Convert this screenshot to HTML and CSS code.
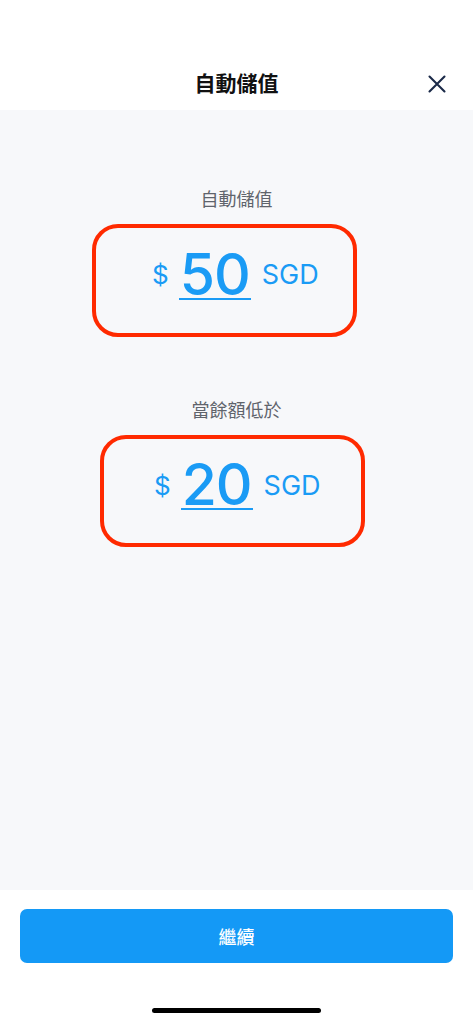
FILE: index.html
```html
<!DOCTYPE html>
<html lang="zh-Hant">
<head>
<meta charset="utf-8">
<title>自動儲值</title>
<link rel="stylesheet" href="styles.css">
</head>
<body>
<div class="screen">
  <header class="topbar">
    <div class="topbar-side"></div>
    <h1 class="topbar-title">自動儲值</h1>
    <div class="topbar-side topbar-side-right">
      <button class="close-btn" aria-label="關閉">
        <svg width="18" height="18" viewBox="0 0 18 18"><path d="M1.5 1.5 L16.5 16.5 M16.5 1.5 L1.5 16.5" stroke="#1b2a48" stroke-width="2.1" stroke-linecap="round" fill="none"/></svg>
      </button>
    </div>
  </header>
  <main class="content">
    <section class="field field-first">
      <div class="field-label">自動儲值</div>
      <div class="amount-box amount-box-a">
        <span class="currency">$</span>
        <span class="value">50</span>
        <span class="unit">SGD</span>
      </div>
    </section>
    <section class="field field-second">
      <div class="field-label">當餘額低於</div>
      <div class="amount-box amount-box-b">
        <span class="currency">$</span>
        <span class="value">20</span>
        <span class="unit">SGD</span>
      </div>
    </section>
  </main>
  <footer class="bottom">
    <button class="primary-btn">繼續</button>
    <div class="home-indicator"></div>
  </footer>
</div>
</body>
</html>
```
FILE: styles.css
```css
* { box-sizing: border-box; }
html, body { margin: 0; padding: 0; }
body {
  width: 473px;
  height: 1024px;
  background: #ffffff;
  font-family: "Inter", "Noto Sans CJK TC", sans-serif;
  overflow: hidden;
}
.screen {
  display: flex;
  flex-direction: column;
  height: 1024px;
}
.topbar {
  height: 110px;
  padding-top: 56px;
  display: grid;
  grid-template-columns: 1fr auto 1fr;
  align-items: start;
  background: #ffffff;
}
.topbar-title {
  margin: 0;
  height: 52px;
  line-height: 52px;
  font-family: "Noto Sans CJK TC", sans-serif;
  font-size: 21px;
  font-weight: 700;
  color: #111111;
  text-align: center;
}
.topbar-side-right {
  display: flex;
  justify-content: flex-end;
  padding-right: 27px;
}
.close-btn {
  border: 0;
  background: none;
  padding: 0;
  width: 18px;
  height: 56px;
  display: flex;
  align-items: center;
  justify-content: center;
}
.content {
  height: 780px;
  background: #f7f8fa;
  display: flex;
  flex-direction: column;
  padding-top: 76px;
}
.field {
  display: flex;
  flex-direction: column;
  align-items: flex-start;
}
.field-second { margin-top: 60px; }
.field-label {
  align-self: center;
  height: 24px;
  line-height: 24px;
  font-family: "Noto Sans CJK TC", sans-serif;
  font-size: 18px;
  color: #5f646c;
  margin-bottom: 14px;
}
.amount-box {
  width: 265px;
  height: 113px;
  border: 4px solid #ff2a00;
  border-radius: 26px;
  display: flex;
  align-items: center;
  padding-bottom: 11px;
  color: #1a9bf5;
}
.amount-box-a { margin-left: 92px; padding-left: 56px; }
.amount-box-b { margin-left: 100px; padding-left: 50px; height: 112px; }
.currency {
  font-size: 26px;
  line-height: 26px;
  margin-right: 10px;
}
.value {
  font-size: 57px;
  font-weight: 500;
  line-height: 47px;
  padding: 0 1px;
  letter-spacing: -1px;
  border-bottom: 2px solid #1a9bf5;
  margin-right: 11px;
}
.unit {
  font-size: 27px;
  line-height: 26px;
}
.bottom {
  flex: 1;
  background: #ffffff;
  display: flex;
  flex-direction: column;
  align-items: center;
  padding-top: 19px;
}
.primary-btn {
  width: 433px;
  height: 54px;
  border: 0;
  border-radius: 7px;
  background: #1499f6;
  color: #ffffff;
  font-family: "Noto Sans CJK TC", sans-serif;
  font-size: 18px;
  font-weight: 500;
}
.home-indicator {
  margin-top: 45px;
  width: 169px;
  height: 5px;
  border-radius: 3px;
  background: #000000;
}
```
